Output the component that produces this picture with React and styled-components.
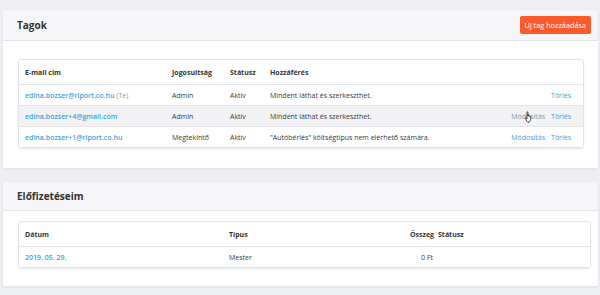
import React from 'react'
import styled, { createGlobalStyle } from 'styled-components'

const COLORS = {
  PAGE: '#eeeff2',
  HEADER_BG: '#f6f6f8',
  BORDER: '#e4e6eb',
  TEXT: '#3a3a3a',
  LINK: '#3fa1d9',
  MUTED: '#9a9a9a',
  ORANGE: '#fb5b2b',
  HOVER: '#f3f3f6',
}

const GlobalStyle = createGlobalStyle`
  html, body {
    margin: 0;
    background: ${COLORS.PAGE};
    font-family: 'Open Sans', 'Noto Sans', sans-serif;
    color: ${COLORS.TEXT};
  }
`

const Page = styled.div`
  padding: 10px 2px 10px 3px;
  display: flex;
  flex-direction: column;
  gap: 14px;
`

const Card = styled.section`
  background: #fff;
  border-radius: 2px;
  box-shadow: 0 1px 3px rgba(40, 50, 70, 0.08);
`

const CardHeader = styled.div`
  height: ${props => props.height || 31}px;
  display: flex;
  align-items: center;
  justify-content: space-between;
  padding: 0 7px 0 14px;
  background: ${COLORS.HEADER_BG};
  border-bottom: 1px solid ${COLORS.BORDER};
  box-sizing: border-box;
`

const CardTitle = styled.h2`
  margin: 0;
  font-size: 10px;
  font-weight: 700;
  color: #333;
`

const Button = styled.button`
  height: 18px;
  padding: 0 5px;
  border: none;
  border-radius: 2px;
  background: ${COLORS.ORANGE};
  color: #fff;
  font-family: inherit;
  font-size: 7.3px;
  cursor: pointer;
`

const CardBody = styled.div`
  padding: ${props => props.padding};
`

const Table = styled.table`
  width: 100%;
  border-collapse: separate;
  border-spacing: 0;
  border: 1px solid #e0e4ea;
  border-radius: 3px;
  box-shadow: 0 1px 2px rgba(40, 50, 70, 0.1);
  font-size: 7px;
  table-layout: fixed;
`

const Th = styled.th`
  height: 24px;
  padding: 0 0 0 ${props => props.pl || 0}px;
  text-align: ${props => props.align || 'left'};
  font-weight: 700;
  color: #333;
  border-bottom: 1px solid ${COLORS.BORDER};
  width: ${props => props.width || 'auto'};
`

const Row = styled.tr`
  background: ${props => (props.hover ? COLORS.HOVER : '#fff')};
`

const Td = styled.td`
  height: ${props => props.h || 20}px;
  padding: 0 ${props => props.pr || 0}px 0 ${props => props.pl || 0}px;
  text-align: ${props => props.align || 'left'};
  border-bottom: ${props => (props.last ? 'none' : `1px solid ${COLORS.BORDER}`)};
  white-space: nowrap;
`

const Email = styled.span`
  color: ${COLORS.LINK};
  font-weight: 600;
`

const Muted = styled.span`
  color: ${COLORS.MUTED};
  margin-left: 2px;
`

const ActionWrap = styled.span`
  position: relative;
`

const Action = styled.span`
  color: ${props => (props.dim ? '#7f98ab' : COLORS.LINK)};
  margin-left: 6px;
`

const Cursor = styled.svg`
  position: absolute;
  left: 19px;
  top: -1px;
`

const members = [
  { email: 'edina.bozser@riport.co.hu', me: true, role: 'Admin', access: 'Mindent láthat és szerkeszthet.', edit: false },
  { email: 'edina.bozser+4@gmail.com', role: 'Admin', access: 'Mindent láthat és szerkeszthet.', edit: true, hover: true },
  { email: 'edina.bozser+1@riport.co.hu', role: 'Megtekintő', access: '"Autóbérlés" költségtípus nem elérhető számára.', edit: true },
]

const HandCursor = () => (
  <Cursor width="10" height="12" viewBox="0 0 10 12">
    <path
      d="M3 1.2c0-.6.9-.6.9 0V5l.1-1c0-.6.9-.6.9 0v1.2c0-.6.9-.6.9 0v.6c0-.6.9-.6.9 0v2.8c0 1.4-.9 2.6-2.3 2.6H4.6c-.8 0-1.4-.5-1.8-1.1L1.3 7.4c-.4-.6.3-1.1.8-.6L3 7.8z"
      fill="#fff"
      stroke="#222"
      strokeWidth="0.8"
      strokeLinejoin="round"
    />
  </Cursor>
)

export default function App() {
  return (
    <>
      <GlobalStyle />
      <Page>
        <Card>
          <CardHeader>
            <CardTitle>Tagok</CardTitle>
            <Button>Új tag hozzáadása</Button>
          </CardHeader>
          <CardBody padding="18px 14px 20px 15px">
            <Table>
              <thead>
                <tr>
                  <Th pl={6} width="147px">E-mail cím</Th>
                  <Th width="58px">Jogosultság</Th>
                  <Th width="40px">Státusz</Th>
                  <Th width="200px">Hozzáférés</Th>
                  <Th />
                </tr>
              </thead>
              <tbody>
                {members.map((m, i) => {
                  const last = i === members.length - 1
                  return (
                    <Row key={m.email} hover={m.hover}>
                      <Td pl={6} last={last}>
                        <Email>{m.email}</Email>
                        {m.me && <Muted>(Te)</Muted>}
                      </Td>
                      <Td last={last}>{m.role}</Td>
                      <Td last={last}>Aktív</Td>
                      <Td last={last}>{m.access}</Td>
                      <Td align="right" pr={12} last={last}>
                        {m.edit && (
                          <ActionWrap>
                            <Action dim={m.hover}>Módosítás</Action>
                            {m.hover && <HandCursor />}
                          </ActionWrap>
                        )}
                        <Action>Törlés</Action>
                      </Td>
                    </Row>
                  )
                })}
              </tbody>
            </Table>
          </CardBody>
        </Card>
        <Card>
          <CardHeader height={29}>
            <CardTitle>Előfizetéseim</CardTitle>
          </CardHeader>
          <CardBody padding="10px 7px 18px 15px">
            <Table>
              <thead>
                <tr>
                  <Th pl={6} width="204px">Dátum</Th>
                  <Th width="164px">Típus</Th>
                  <Th align="right" width="41px">Összeg</Th>
                  <Th pl={4}>Státusz</Th>
                </tr>
              </thead>
              <tbody>
                <Row>
                  <Td pl={6} last>
                    <Email>2019. 05. 29.</Email>
                  </Td>
                  <Td last>Mester</Td>
                  <Td align="right" pr={1} last>0 Ft</Td>
                  <Td last />
                </Row>
              </tbody>
            </Table>
          </CardBody>
        </Card>
      </Page>
    </>
  )
}
